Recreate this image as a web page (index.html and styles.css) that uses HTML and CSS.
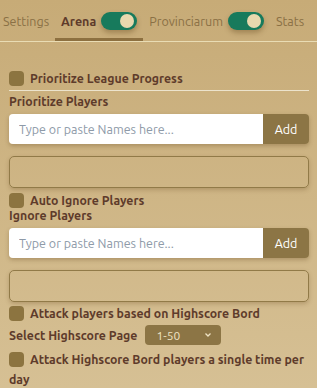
FILE: index.html
```html
<!DOCTYPE html>
<html>
<head>
<meta charset="utf-8">
<link rel="stylesheet" href="styles.css">
</head>
<body>
<div class="page">
  <nav class="tabs">
    <span class="tab">Settings</span>
    <span class="tab active">Arena <span class="toggle"><span class="knob"></span></span></span>
    <span class="tab">Provinciarum <span class="toggle"><span class="knob"></span></span></span>
    <span class="tab">Stats</span>
  </nav>
  <div class="content">
    <label class="check sep"><span class="box"></span><span>Prioritize League Progress</span></label>
    <div class="field-label">Prioritize Players</div>
    <div class="add-row"><input class="name-input" placeholder="Type or paste Names here..."><button class="add-btn">Add</button></div>
    <div class="list-box"></div>
    <label class="check"><span class="box"></span><span>Auto Ignore Players</span></label>
    <div class="field-label tight">Ignore Players</div>
    <div class="add-row"><input class="name-input" placeholder="Type or paste Names here..."><button class="add-btn">Add</button></div>
    <div class="list-box last"></div>
    <label class="check"><span class="box"></span><span>Attack players based on Highscore Bord</span></label>
    <div class="select-row"><span>Select Highscore Page</span><span class="select">1-50<svg width="8" height="6" viewBox="0 0 8 6"><path d="M1.5 1.5 L4 4 L6.5 1.5" fill="none" stroke="#efe3c4" stroke-width="1.3"/></svg></span></div>
    <label class="check wrap"><span class="box"></span><span>Attack Highscore Bord players a single time per day</span></label>
  </div>
</div>
</body>
</html>
```
FILE: styles.css
```css
html, body { margin: 0; padding: 0; }
body {
  width: 317px;
  height: 388px;
  overflow: hidden;
  background: linear-gradient(#c7ab77, #d6c094);
  font-family: "Ubuntu", "Noto Sans", sans-serif;
  color: #5e3b2b;
}
.tabs {
  display: flex;
  align-items: center;
  height: 41px;
  border-bottom: 1px solid #e9dcb4;
  padding-left: 3px;
}
.tab {
  display: flex;
  align-items: center;
  height: 41px;
  box-sizing: border-box;
  font-size: 12.5px;
  color: #8a7045;
  padding: 0 6px;
  gap: 5px;
}
.tab:first-child { padding-left: 0; }
.tab.active {
  color: #5e3b2b;
  font-weight: bold;
  border-bottom: 3px solid #8d7040;
  padding-top: 3px;
}
.toggle {
  width: 36px;
  height: 18px;
  border-radius: 9px;
  background: #177a5c;
  position: relative;
  box-shadow: 0 3px 5px rgba(90, 60, 20, 0.35);
}
.knob {
  position: absolute;
  right: 3px;
  top: 2px;
  width: 14px;
  height: 14px;
  border-radius: 50%;
  background: #e8d8ae;
}
.content { padding: 0 8px 0 9px; }
.check {
  display: flex;
  align-items: center;
  gap: 6px;
  font-weight: bold;
  font-size: 12.3px;
  line-height: 15px;
}
.check .box {
  flex: none;
  width: 15px;
  height: 15px;
  border-radius: 4px;
  background: #8c7440;
}
.check.sep {
  margin-top: 29px;
  padding-bottom: 4px;
  border-bottom: 1px solid #ece3cc;
}
.field-label {
  font-weight: bold;
  font-size: 12.3px;
  margin-top: 3px;
  line-height: 15px;
}
.field-label.tight { margin-top: 0; }
.add-row {
  display: flex;
  margin-top: 5px;
  height: 30px;
  box-shadow: 0 2px 4px rgba(90, 60, 20, 0.3);
  border-radius: 4px;
}
.name-input {
  flex: 1;
  min-width: 0;
  border: none;
  border-radius: 4px 0 0 4px;
  background: #fff;
  padding: 0 10px;
  font-family: inherit;
  font-size: 12.5px;
  color: #333;
  outline: none;
}
.name-input::placeholder { color: #8e9aa8; }
.add-btn {
  width: 46px;
  border: none;
  border-radius: 0 4px 4px 0;
  background: #8c7545;
  color: #fff;
  font-family: inherit;
  font-size: 12.5px;
  padding: 0;
}
.list-box {
  height: 30px;
  margin-top: 12px;
  margin-bottom: 5px;
  border: 1px solid #917a48;
  border-radius: 5px;
  box-shadow: 0 2px 4px rgba(90, 60, 20, 0.25);
}
.list-box.last { margin-bottom: 4px; }
.select-row {
  display: flex;
  align-items: center;
  gap: 8px;
  font-weight: bold;
  font-size: 12.3px;
  margin-top: 4px;
}
.select {
  display: flex;
  align-items: center;
  justify-content: space-between;
  width: 76px;
  height: 20px;
  box-sizing: border-box;
  padding: 0 9px 0 11px;
  border-radius: 4px;
  background: #8c7545;
  color: #efe3c4;
  font-weight: normal;
  font-size: 12px;
}
.check.wrap {
  display: block;
  margin-top: 5px;
  line-height: 20px;
}
.check.wrap .box {
  display: inline-block;
  vertical-align: -3px;
  margin-right: 6px;
}
```
